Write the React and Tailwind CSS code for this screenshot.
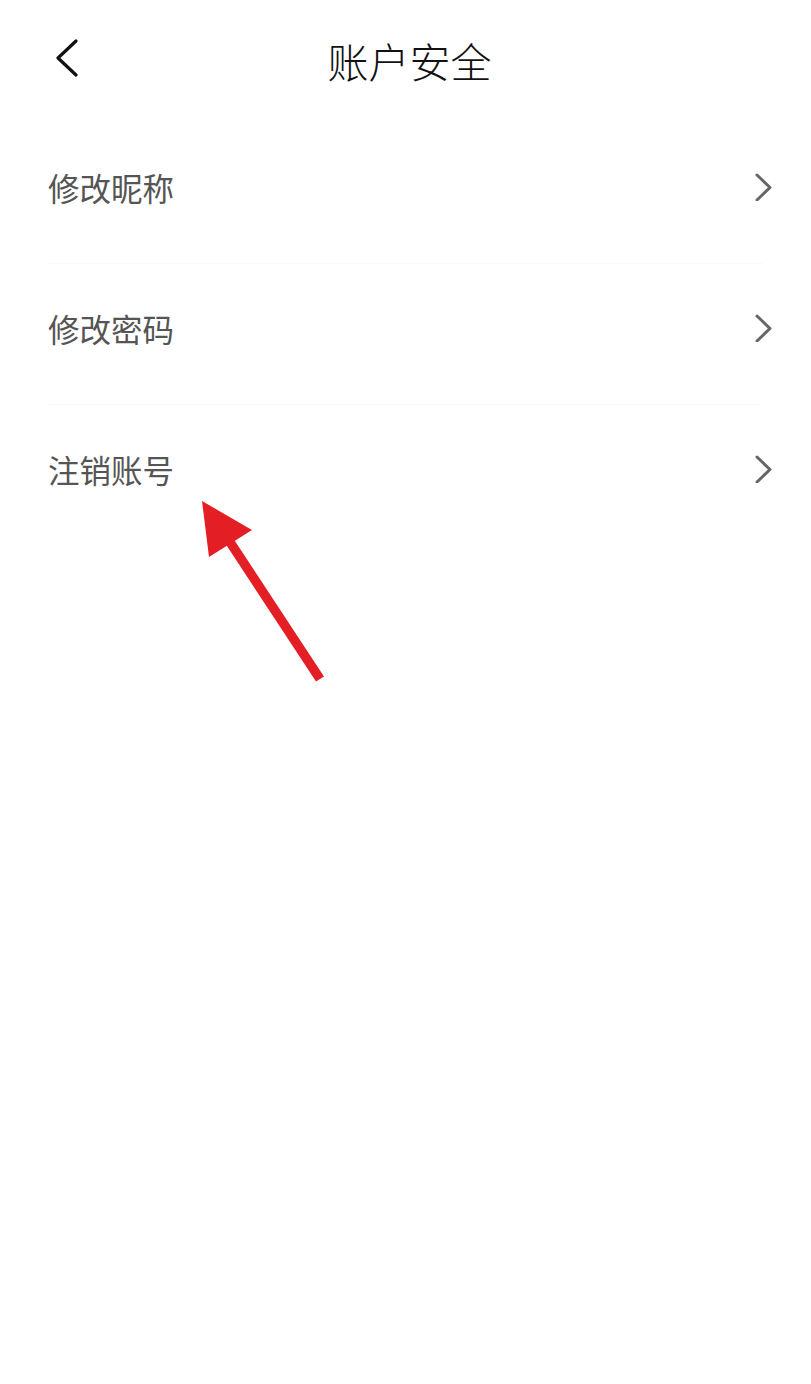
import React from 'react';

const items = ['修改昵称', '修改密码', '注销账号'];

const ChevronRight = () => (
  <svg width="20" height="28" viewBox="0 0 20 28" fill="none">
    <path d="M3 2 L16 14.5 L3 27" stroke="#666666" strokeWidth="3" strokeLinecap="round" strokeLinejoin="round" />
  </svg>
);

const App = () => {
  return (
    <div
      className="min-h-[1384px] w-full bg-white"
      style={{ fontFamily: '"Noto Sans CJK SC", "Noto Sans", sans-serif' }}
    >
      {/* Header */}
      <div className="relative flex h-[123px] items-start justify-center">
        <button className="absolute left-[52px] top-[39px]">
          <svg width="28" height="38" viewBox="0 0 28 38" fill="none">
            <path d="M24 2 L6 19 L24 36" stroke="#111111" strokeWidth="3.2" strokeLinecap="round" strokeLinejoin="round" />
          </svg>
        </button>
        <h1 className="ml-[8px] mt-[35px] text-[41px] leading-[50px] font-light text-[#111]">账户安全</h1>
      </div>

      {/* List */}
      <div className="px-[48px]">
        {items.map((label, i) => (
          <div
            key={label}
            className={`flex items-center justify-between pt-[44px] pb-[56px] ${i < items.length - 1 ? 'border-b border-[#fafafa]' : ''}`}
          >
            <span className="text-[31.5px] leading-[40px] text-[#555]">{label}</span>
            <span className="mr-[-11px]">
              <ChevronRight />
            </span>
          </div>
        ))}
      </div>

      {/* Annotation arrow */}
      <svg className="absolute left-0 top-0" width="811" height="1384" viewBox="0 0 811 1384">
        <line x1="320" y1="679" x2="226" y2="536" stroke="#e41e25" strokeWidth="9.5" />
        <polygon points="202,501 252,530 209,557" fill="#e41e25" />
      </svg>
    </div>
  );
};

export default App;
